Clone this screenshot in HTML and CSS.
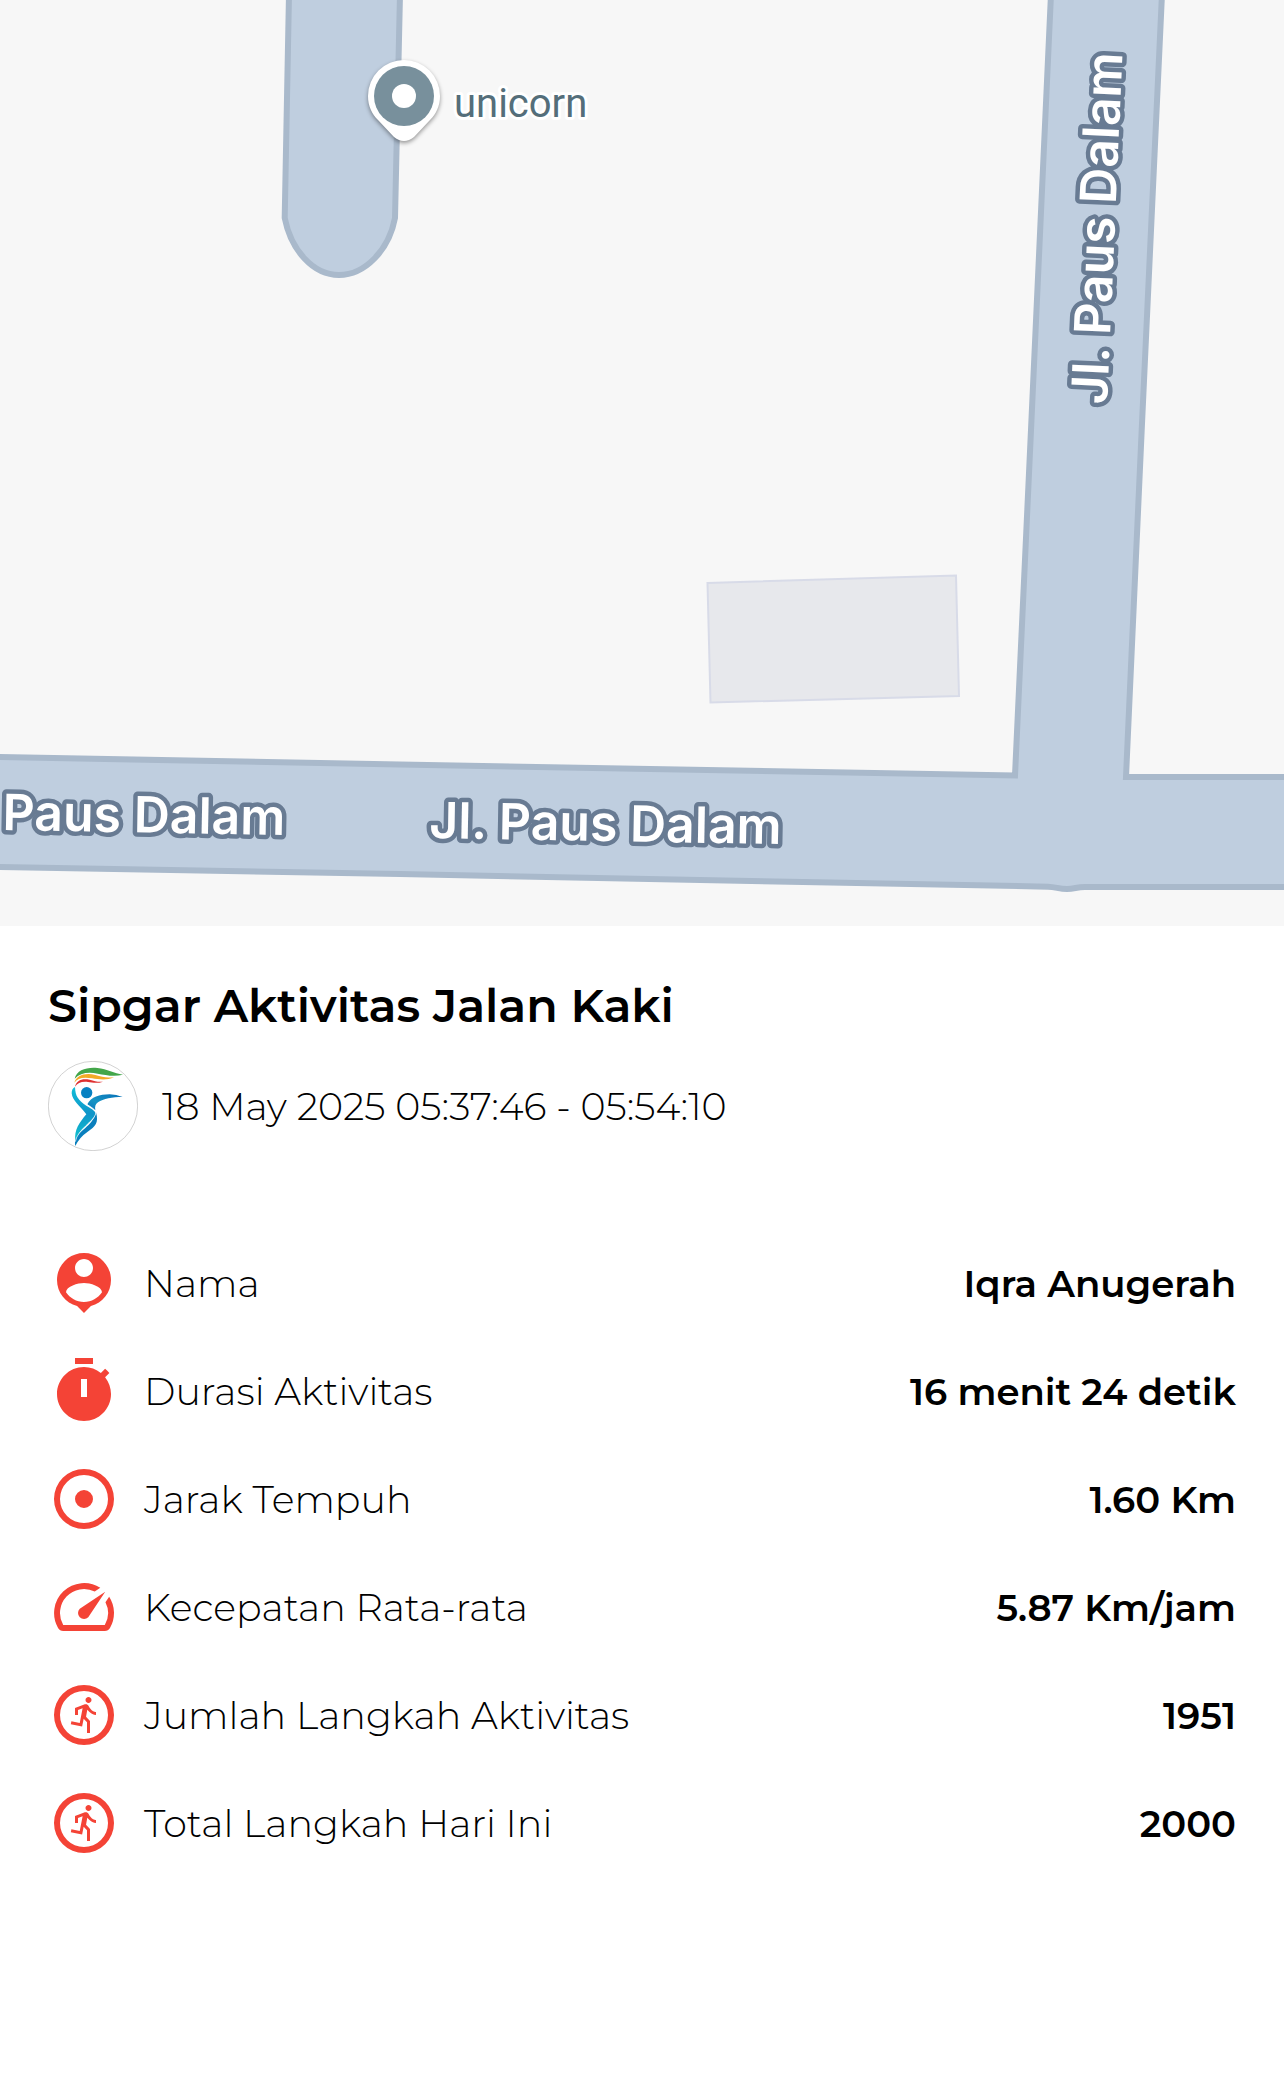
FILE: index.html
```html
<!DOCTYPE html>
<html lang="id">
<head>
<meta charset="utf-8">
<meta name="viewport" content="width=device-width, initial-scale=1">
<title>Sipgar Aktivitas Jalan Kaki</title>
<link rel="stylesheet" href="styles.css">
</head>
<body>
<main class="activity">
  <svg class="map" viewBox="0 0 1284 926" role="img" aria-label="Peta Jl. Paus Dalam">
    <!-- cul-de-sac -->
    <path class="road" d="M289 -6L284.700 218C291 250 313 275 339 275S389 250 395 218L400 -6"/>
    <!-- main road and side road -->
    <path class="road" d="M-6 757L400 764.500L1015 775.500L1031 430L1051 -6H1162L1141.700 430L1126 777H1290V887H1085C1076 887 1075 889 1067 889S1056 887 1048 886.700L830 882.500L400 874L-6 867Z"/>
    <path class="building" d="M707.500 583L956 575.500L959 696L710.500 702.500Z"/>
    <path class="pin" d="M404 60a36 36 0 0 1 36 36c0 10-4 18-10 24L414 137q-10 8-20 0L378 120c-6-6-10-14-10-24a36 36 0 0 1 36-36z"/>
    <circle class="pin-disc" cx="404" cy="96" r="30"/>
    <circle class="pin-hole" cx="404" cy="96" r="12"/>
    <text class="place" x="454" y="117">unicorn</text>
    <text class="street street-end" transform="translate(285 835) rotate(1)">Paus Dalam</text>
    <text class="street" transform="translate(429 838) rotate(1)">Jl. Paus Dalam</text>
    <text class="street" transform="translate(1107 405) rotate(-87.500)">Jl. Paus Dalam</text>
  </svg>

  <section class="details">
    <h1 class="title">Sipgar Aktivitas Jalan Kaki</h1>
    <div class="session">
      <svg class="avatar" viewBox="54 303 270 270" role="img" aria-label="Sipgar">
        <defs>
          <linearGradient id="body" x1="0" y1="0" x2="0" y2="1"><stop offset="0" stop-color="#12bfd8"/><stop offset=".5" stop-color="#0f94c9"/><stop offset="1" stop-color="#10c5cf"/></linearGradient>
          <linearGradient id="arm" x1="0" y1="1" x2="1" y2="0"><stop offset="0" stop-color="#0a78bd"/><stop offset=".4" stop-color="#1594c4"/><stop offset="1" stop-color="#0870b8"/></linearGradient>
        </defs>
        <circle class="avatar-ring" cx="189" cy="438" r="134"/>
        <path fill="#43a64a" d="M134 356C140 330 170 321 202 324C232 327 252 340 279 344C252 351 226 345 203 341C172 335 150 340 134 356Z"/>
        <path fill="#f3aa27" d="M133 368C139 346 166 337 196 345C218 351 230 355 252 351C232 362 207 358 186 355C158 350 143 355 133 368Z"/>
        <path fill="#df3131" d="M135 380C139 362 155 354 179 359C194 363 204 367 219 365C203 371 187 368 174 366C154 364 143 369 135 380Z"/>
        <circle fill="#0781c2" cx="170" cy="398" r="17"/>
        <path fill="url(#arm)" d="M172 433C183 411 209 403 239 403Q259 404 278 411C247 411 220 416 204 427C196 433 194 440 196 451Z"/>
        <path fill="url(#body)" d="M135 381C136 410 145 420 169 437C187 448 200 454 196 465C187 486 148 506 136 542C132 510 148 488 169 463C151 439 127 422 125 400Q125 385 135 381Z"/>
        <path fill="#0a7fbd" d="M198 457C207 489 196 500 173 515Q148 532 136 558C130 525 162 512 183 487Q197 470 198 457Z"/>
        <path fill="none" stroke="#fff" stroke-width="2" d="M171 434C189 444 200 452 197 462C190 486 143 507 136 545"/>
      </svg>
      <time class="when">18 May 2025 05:37:46 - 05:54:10</time>
    </div>

    <dl class="stats">
      <div class="stat">
        <svg class="icon" viewBox="0 0 24 24" aria-hidden="true"><path d="M12 2c-4.970 0-9 4.030-9 9 0 4.170 2.840 7.670 6.690 8.690L12 22l2.310-2.310C18.160 18.670 21 15.170 21 11c0-4.970-4.030-9-9-9zm0 2c1.660 0 3 1.340 3 3s-1.340 3-3 3-3-1.340-3-3 1.340-3 3-3zm0 14.300c-2.500 0-4.710-1.280-6-3.220.030-1.990 4-3.080 6-3.080 1.990 0 5.970 1.090 6 3.080-1.290 1.940-3.500 3.220-6 3.220z"/></svg>
        <dt class="label">Nama</dt><dd class="value">Iqra Anugerah</dd>
      </div>
      <div class="stat">
        <svg class="icon" viewBox="0 0 24 24" aria-hidden="true"><path d="M15 1H9v2h6V1zM11 14h2V8h-2v6zm8.030-6.610l1.420-1.420c-.430-.510-.900-.990-1.410-1.410l-1.420 1.420C16.070 4.740 14.120 4 12 4c-4.970 0-9 4.030-9 9s4.020 9 9 9 9-4.030 9-9c0-2.120-.740-4.070-1.970-5.610z"/></svg>
        <dt class="label">Durasi Aktivitas</dt><dd class="value">16 menit 24 detik</dd>
      </div>
      <div class="stat">
        <svg class="icon" viewBox="0 0 24 24" aria-hidden="true"><path d="M12 2a10 10 0 1 0 0 20a10 10 0 1 0 0-20zm0 2a8 8 0 1 1 0 16a8 8 0 1 1 0-16zm0 5a3 3 0 1 0 0 6a3 3 0 1 0 0-6z"/></svg>
        <dt class="label">Jarak Tempuh</dt><dd class="value">1.60 Km</dd>
      </div>
      <div class="stat">
        <svg class="icon" viewBox="0 0 24 24" aria-hidden="true"><path d="M20.380 8.570l-1.230 1.850a8 8 0 0 1-.220 7.580H5.070A8 8 0 0 1 15.580 6.850l1.850-1.230A10 10 0 0 0 3.350 19a2 2 0 0 0 1.720 1h13.850a2 2 0 0 0 1.740-1 10 10 0 0 0-.270-10.440zm-9.790 6.840a2 2 0 0 0 2.830 0l5.660-8.490-8.490 5.660a2 2 0 0 0 0 2.830z"/></svg>
        <dt class="label">Kecepatan Rata-rata</dt><dd class="value">5.87 Km/jam</dd>
      </div>
      <div class="stat">
        <svg class="icon" viewBox="0 0 24 24" aria-hidden="true"><path d="M12 2a10 10 0 1 0 0 20a10 10 0 1 0 0-20zm0 2a8 8 0 1 1 0 16a8 8 0 1 1 0-16z"/><path d="M13.500 6c.550 0 1 .450 1 1s-.450 1-1 1-1-.450-1-1 .450-1 1-1zm2.500 6c-.700 0-2.010-.540-2.910-1.760l-.410 2.350L14 14.030V18h-1v-3.580l-1.110-1.210-.520 2.640-3.770-.770.200-.980 2.780.570.960-4.890-1.540.570V12H9V9.650l3.280-1.210c.490-.180 1.030.060 1.260.530C14.370 10.670 15.590 11 16 11v1z"/></svg>
        <dt class="label">Jumlah Langkah Aktivitas</dt><dd class="value">1951</dd>
      </div>
      <div class="stat">
        <svg class="icon" viewBox="0 0 24 24" aria-hidden="true"><path d="M12 2a10 10 0 1 0 0 20a10 10 0 1 0 0-20zm0 2a8 8 0 1 1 0 16a8 8 0 1 1 0-16z"/><path d="M13.500 6c.550 0 1 .450 1 1s-.450 1-1 1-1-.450-1-1 .450-1 1-1zm2.500 6c-.700 0-2.010-.540-2.910-1.760l-.410 2.350L14 14.030V18h-1v-3.580l-1.110-1.210-.520 2.640-3.770-.770.200-.980 2.780.570.960-4.890-1.540.570V12H9V9.650l3.280-1.210c.490-.180 1.030.060 1.260.530C14.370 10.670 15.590 11 16 11v1z"/></svg>
        <dt class="label">Total Langkah Hari Ini</dt><dd class="value">2000</dd>
      </div>
    </dl>
  </section>
</main>
</body>
</html>
```
FILE: styles.css
```css
* { box-sizing: border-box; }

body {
  margin: 0;
  background: #fff;
  color: #000;
  font-family: Montserrat, Inter, sans-serif;
}

.map {
  display: block;
  width: 100%;
  height: auto;
  background: #f7f7f7;
}

.road {
  fill: #bfcedf;
  stroke: #a9b9cb;
  stroke-width: 6px;
}

.building {
  fill: #e7e8ec;
  stroke: #d8dbe8;
  stroke-width: 2px;
}

.pin {
  fill: #fff;
  filter: drop-shadow(0 2px 2px rgba(0, 0, 0, .4));
}

.pin-disc { fill: #78909c; }
.pin-hole { fill: #fff; }

.place,
.street {
  paint-order: stroke;
  stroke-linejoin: round;
}

.place {
  font-family: Roboto, sans-serif;
  font-size: 40px;
  fill: #546e7a;
  stroke: #fff;
  stroke-width: 6px;
}

.street {
  font-family: Inter, sans-serif;
  font-size: 50px;
  font-weight: 600;
  fill: #fff;
  stroke: #687b93;
  stroke-width: 9px;
}

.street-end { text-anchor: end; }

.details { padding: 48px; }

.title {
  margin: 0;
  font-size: 46px;
  font-weight: 600;
  line-height: 64px;
}

.session {
  display: flex;
  align-items: center;
  gap: 24px;
  margin-top: 23px;
}

.avatar {
  width: 90px;
  height: 90px;
}

.avatar-ring {
  fill: #fff;
  stroke: #bbb;
  stroke-width: 2px;
}

.when {
  font-size: 38px;
  font-weight: 300;
}

.stats {
  display: grid;
  gap: 36px;
  margin: 96px 0 0;
}

.stat {
  display: flex;
  align-items: center;
}

.icon {
  width: 72px;
  height: 72px;
  fill: #f44336;
  fill-rule: evenodd;
}

.label {
  margin-left: 24px;
  font-size: 38px;
  font-weight: 300;
}

.value {
  margin: 0 0 0 auto;
  font-size: 37px;
  font-weight: 600;
}
```
